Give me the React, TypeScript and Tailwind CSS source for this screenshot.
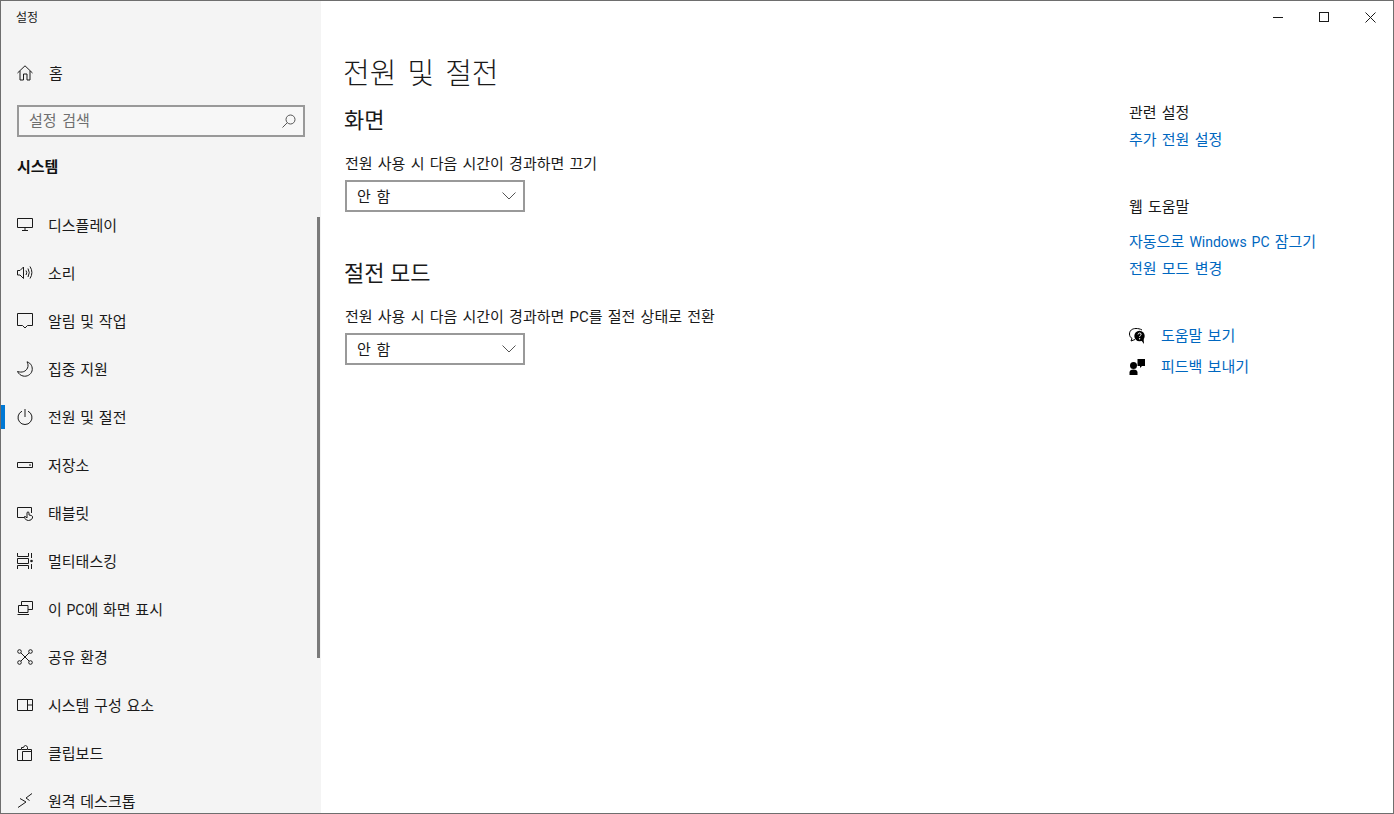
import type { ReactNode } from "react";

// Roboto first so the Latin letters come out narrow as in Segoe, hangul falls through to Noto
const font = "font-['Roboto','Noto_Sans_CJK_KR',sans-serif]";

// Icons are all drawn on a 16x16 box with 1px strokes, like the Segoe MDL2 glyphs
const Icon = ({ children }: { children: ReactNode }) => (
  <svg width="16" height="16" viewBox="0 0 16 16" fill="none" stroke="#1a1a1a" strokeWidth="1" className="shrink-0">
    {children}
  </svg>
);

const navItems: { label: ReactNode; key: string; active?: boolean; icon: ReactNode }[] = [
  {
    key: "display",
    label: "디스플레이",
    icon: <path d="M.5 1.500h15v9H.5zM8 10.500v3M5 13.500h6" />,
  },
  {
    key: "sound",
    label: "소리",
    icon: (
      <>
        <path d="M.5 5.500h2.500L6.500 2v11.500L3 10H.5z" />
        <path d="M9 5.500q1.500 2 0 4.500M11 3.500q2.500 4 0 8.500M13 1.500q3.800 6 0 12" />
      </>
    ),
  },
  {
    key: "notifications",
    label: "알림 및 작업",
    icon: <path d="M.5 .5h15v12h-5L8 15l-2.500-2.500h-5z" />,
  },
  {
    key: "focus",
    label: "집중 지원",
    icon: <path d="M10 .8C14 2 16 6 15 10c-1 3.500-5 6-9 5-2.500-.6-4.500-2.300-5.500-4.500C5 12 9 10.500 10.500 7 11.500 5 11 2.500 10 .8z" />,
  },
  {
    key: "power",
    label: "전원 및 절전",
    active: true,
    icon: (
      <>
        <path d="M8 0v8" />
        <path d="M5 2.200a7 7 0 1 0 6 0" />
      </>
    ),
  },
  {
    key: "storage",
    label: "저장소",
    icon: (
      <>
        <path d="M.5 5.500h15v5H.5z" />
        <path d="M12 8h2" />
      </>
    ),
  },
  {
    key: "tablet",
    label: "태블릿",
    icon: (
      <>
        <path d="M7 12.500H.5v-10h14V8" />
        <path d="M10 13V7.500q1-1.200 2 0V10l2.500.5q1 .5 1 1.500v1q-1 2.500-4 2.500-2.500 0-3.500-2l-1-1.500q.8-1 2 0z" fill="#f4f4f4" />
      </>
    ),
  },
  {
    key: "multitasking",
    label: "멀티태스킹",
    icon: (
      <>
        <path d="M.5 0v3.500h11V0M.5 16v-3.500h11V16M.5 5.500h11v5H.5z" />
        <path d="M14.500 0v5M14.500 11v5" />
        <circle cx="14.500" cy="8" r="1.300" fill="#1a1a1a" stroke="none" />
      </>
    ),
  },
  {
    key: "projecting",
    label: (
      <>
        이 <span className="text-[14px]">PC</span>에 화면 표시
      </>
    ),
    icon: (
      <>
        <path d="M4.500 4V.5h11v8H11" />
        <path d="M1.500 4.500h9.500v7h-9.500zM.5 13.500h11.500" />
      </>
    ),
  },
  {
    key: "shared",
    label: "공유 환경",
    icon: (
      <>
        <circle cx="2.500" cy="2.500" r="1.800" />
        <circle cx="13.500" cy="2.500" r="1.800" />
        <circle cx="2.500" cy="13.500" r="1.800" />
        <circle cx="13.500" cy="13.500" r="1.800" />
        <path d="M4 4l8 8M12 4l-8 8" />
      </>
    ),
  },
  {
    key: "components",
    label: "시스템 구성 요소",
    icon: <path d="M.5 2.500h15v11H.5zM10.500 2.500v11M10.500 8h5" />,
  },
  {
    key: "clipboard",
    label: "클립보드",
    icon: (
      <>
        <path d="M4 4.500H.5v11h14v-11H11" />
        <path d="M5.500 15V6.500h8.500" />
        <path d="M4.500 4.500v-2h2q.5-2 2-2t2 2v2z" />
      </>
    ),
  },
  {
    key: "remote",
    label: "원격 데스크톱",
    icon: <path d="M1 14.500l8-5.500-6-3.500M15 .5L9 5l3.500 2.500" />,
  },
];

const Dropdown = () => (
  <div className="mt-[5px] flex h-[32px] w-[180px] items-center justify-between border-2 border-[#999999] bg-white pl-[10px] pr-[7px]">
    <span className="pt-[2px] text-[15px] text-[#1a1a1a] [word-spacing:2px]">안 함</span>
    <svg width="14" height="8" viewBox="0 0 14 8" fill="none" stroke="#555555" strokeWidth="1">
      <path d="M.5 .5L7 7l6.500-6.500" />
    </svg>
  </div>
);

const SideLink = ({ children }: { children: ReactNode }) => (
  <a className="block h-[27px] text-[15px] leading-[27px] text-[#0067c0] [word-spacing:1.500px]">{children}</a>
);

export default function App() {
  return (
    <div className={`${font} relative flex h-[814px] w-[1394px] overflow-hidden border border-[#6e6e6e] bg-white`}>
      {/* Sidebar */}
      <aside className="relative flex h-full w-[320px] shrink-0 flex-col overflow-hidden bg-[#f4f4f4]">
        <div className="h-[32px] shrink-0 pl-[15px] pt-[9px] text-[12px] leading-[16px] text-[#1a1a1a]">설정</div>
        <div className="mt-[16px] flex h-[48px] shrink-0 items-center pl-[16px] text-[15px] text-[#1a1a1a]">
          <svg width="16" height="16" viewBox="0 0 16 16" fill="none" stroke="#1a1a1a" strokeWidth="1">
            <path d="M.5 8L8 .8 15.500 8M3 6v9h3.500V9h3.500v6H13V6" />
          </svg>
          <span className="ml-[16px] pt-[2px]">홈</span>
        </div>
        <div className="ml-[16px] mt-[8px] flex h-[32px] w-[288px] shrink-0 items-center justify-between border-2 border-[#999999] bg-[#f7f7f7] pl-[10px] pr-[7px]">
          <span className="text-[15px] text-[#6f6f6f] [word-spacing:2px]">설정 검색</span>
          <svg width="14" height="14" viewBox="0 0 14 14" fill="none" stroke="#555555" strokeWidth="1">
            <circle cx="8.500" cy="5.500" r="4.500" />
            <path d="M5.300 8.700L.5 13.500" />
          </svg>
        </div>
        <div className="ml-[16px] mt-[19px] h-[22px] shrink-0 text-[15px] font-bold leading-[22px] text-[#111111]">시스템</div>
        <nav className="mt-[23px] flex shrink-0 flex-col">
          {navItems.map((item) => (
            <div key={item.key} className="relative flex h-[48px] shrink-0 items-center pl-[16px]">
              {item.active && <span className="absolute left-0 top-[12px] h-[24px] w-[4px] bg-[#0078d4]" />}
              <Icon>{item.icon}</Icon>
              <span className="ml-[15px] pt-[2px] text-[15px] text-[#1a1a1a] [word-spacing:1px]">{item.label}</span>
            </div>
          ))}
        </nav>
        <div className="absolute left-[316px] top-[216px] h-[441px] w-[3px] bg-[#7a7a7a]" />
      </aside>

      {/* Main content */}
      <main className="min-w-0 flex-1 pl-[24px] text-[#1a1a1a]">
        <h1 className="-ml-[2px] mt-[51px] h-[44px] text-[29px] font-light leading-[44px] [word-spacing:4px]">전원 및 절전</h1>
        <h2 className="-ml-px mt-[9px] h-[32px] text-[22px] font-normal leading-[32px]">화면</h2>
        <div className="mt-[16px] h-[22px] text-[15px] leading-[22px] [word-spacing:1.500px]">전원 사용 시 다음 시간이 경과하면 끄기</div>
        <Dropdown />
        <h2 className="-ml-px mt-[46px] h-[32px] text-[22px] font-normal leading-[32px]">절전 모드</h2>
        <div className="mt-[16px] h-[22px] text-[15px] leading-[22px] [word-spacing:1.500px]">전원 사용 시 다음 시간이 경과하면 PC를 절전 상태로 전환</div>
        <Dropdown />
      </main>

      {/* Right column */}
      <section className="w-[264px] shrink-0 text-[#1a1a1a]">
        <div className="mt-[100px] h-[24px] text-[15px] leading-[24px] [word-spacing:1.500px]">관련 설정</div>
        <div className="mt-[2px]">
          <SideLink>추가 전원 설정</SideLink>
        </div>
        <div className="mt-[41px] h-[24px] text-[15px] leading-[24px] [word-spacing:1.500px]">웹 도움말</div>
        <div className="mt-[10px]">
          <SideLink>
            자동으로 <span className="text-[14px]">Windows PC</span> 잠그기
          </SideLink>
          <SideLink>전원 모드 변경</SideLink>
        </div>
        <div className="mt-[37px] flex h-[31px] items-center">
          <svg width="16" height="16" viewBox="0 0 16 16" className="shrink-0">
            <path d="M13 2C11 .8 9 .5 7 .5 3 .5.5 2.700.5 6c0 2 1 3.500 2.500 4.500L2 13l4-1.500" fill="none" stroke="#000" />
            <circle cx="10.500" cy="8" r="5.200" fill="#000" />
            <path d="M12 12l3 4-.4-5.500z" fill="#000" />
            <path d="M9 6.500q.2-1.500 1.600-1.500 1.500 0 1.500 1.300c0 1.200-1.500 1.200-1.500 2.500" fill="none" stroke="#fff" />
            <circle cx="10.600" cy="10.700" r=".7" fill="#fff" />
          </svg>
          <a className="ml-[16px] pt-[1px] text-[15px] text-[#0067c0] [word-spacing:1.500px]">도움말 보기</a>
        </div>
        <div className="flex h-[31px] items-center">
          <svg width="16" height="16" viewBox="0 0 16 16" className="shrink-0">
            <circle cx="4.500" cy="6.500" r="3.500" fill="#000" />
            <path d="M.5 16v-2.500c0-2 1.500-3 4-3s4 1 4 3V16z" fill="#000" />
            <path d="M8.500 0H16v7h-3l-2 2V7H8.500z" fill="#000" />
          </svg>
          <a className="ml-[16px] pt-[1px] text-[15px] text-[#0067c0] [word-spacing:1.500px]">피드백 보내기</a>
        </div>
      </section>

      {/* Caption buttons */}
      <div className="absolute right-0 top-0 flex h-[32px]">
        <div className="flex w-[46px] items-center justify-center">
          <div className="h-px w-[10px] bg-[#1a1a1a]" />
        </div>
        <div className="flex w-[46px] items-center justify-center">
          <div className="size-[10px] border border-[#1a1a1a]" />
        </div>
        <div className="flex w-[46px] items-center justify-center">
          <svg width="11" height="11" viewBox="0 0 11 11" stroke="#1a1a1a" strokeWidth="1">
            <path d="M.5 .5l10 10M10.500 .5l-10 10" />
          </svg>
        </div>
      </div>
    </div>
  );
}
